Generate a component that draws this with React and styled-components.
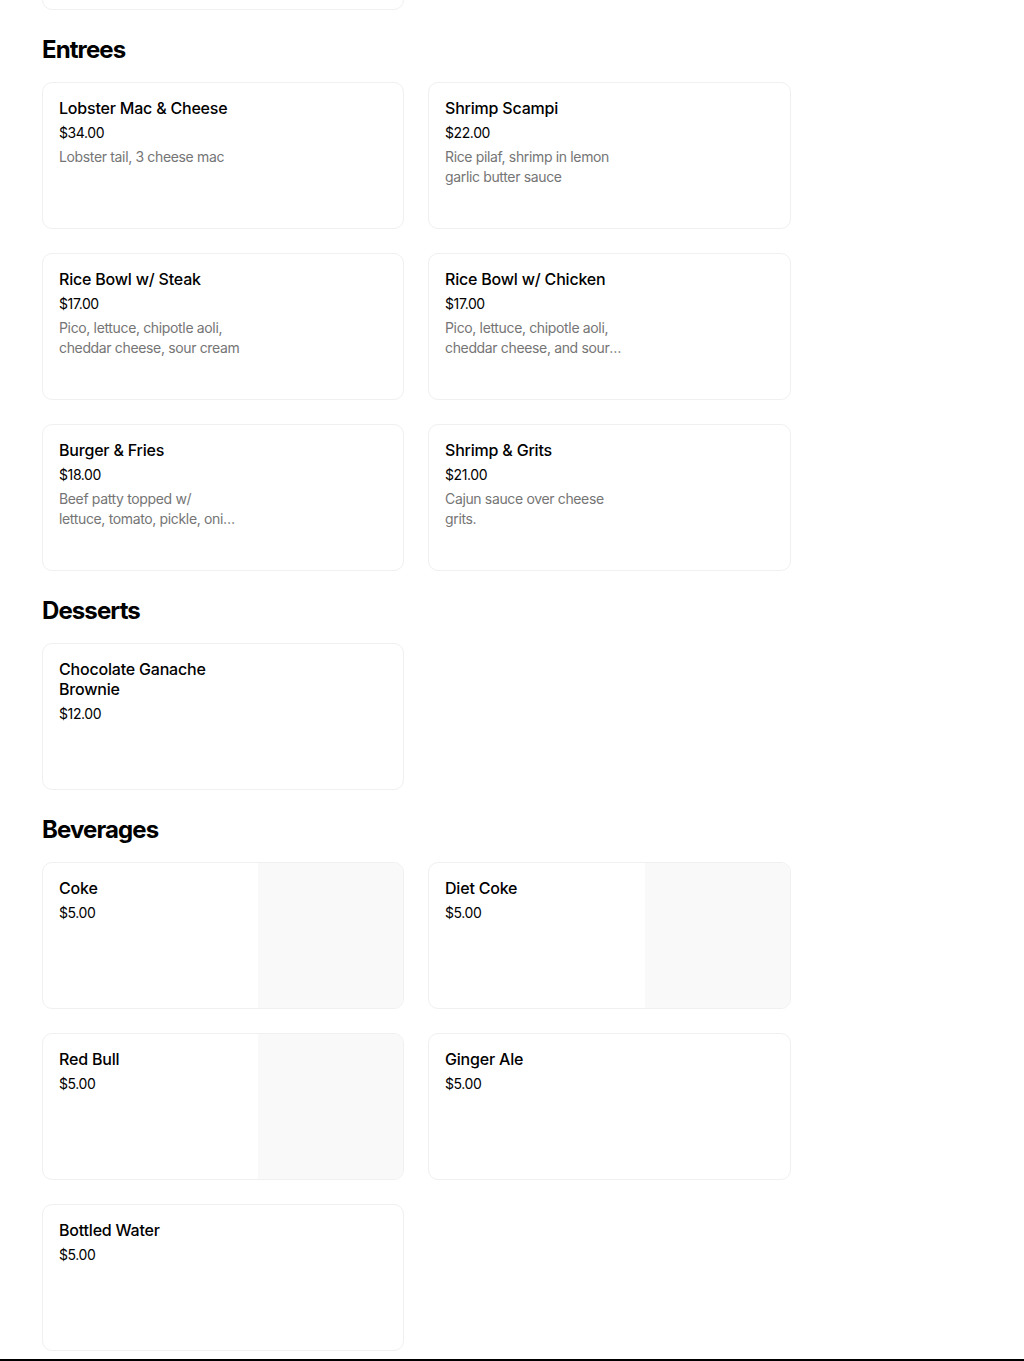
import React from "react";
import styled, { createGlobalStyle } from "styled-components";

const menu = [
  {
    title: "Entrees",
    items: [
      { name: "Lobster Mac & Cheese", price: "$34.00", desc: "Lobster tail, 3 cheese mac" },
      { name: "Shrimp Scampi", price: "$22.00", desc: "Rice pilaf, shrimp in lemon garlic butter sauce" },
      { name: "Rice Bowl w/ Steak", price: "$17.00", desc: "Pico, lettuce, chipotle aoli, cheddar cheese, sour cream" },
      { name: "Rice Bowl w/ Chicken", price: "$17.00", desc: "Pico, lettuce, chipotle aoli, cheddar cheese, and sour cream" },
      { name: "Burger & Fries", price: "$18.00", desc: "Beef patty topped w/ lettuce, tomato, pickle, onion and cheese" },
      { name: "Shrimp & Grits", price: "$21.00", desc: "Cajun sauce over cheese grits." },
    ],
  },
  {
    title: "Desserts",
    items: [{ name: "Chocolate Ganache Brownie", price: "$12.00" }],
  },
  {
    title: "Beverages",
    items: [
      { name: "Coke", price: "$5.00", photo: true },
      { name: "Diet Coke", price: "$5.00", photo: true },
      { name: "Red Bull", price: "$5.00", photo: true },
      { name: "Ginger Ale", price: "$5.00" },
      { name: "Bottled Water", price: "$5.00" },
    ],
  },
];

const App = () => {
  return (
    <>
      <GlobalStyle />
      <Page>
        <Content>
          {/* tail of the section above, scrolled out of view */}
          <Grid>
            <Card />
          </Grid>
          {menu.map((section) => (
            <Section key={section.title}>
              <SectionTitle>{section.title}</SectionTitle>
              <Grid>
                {section.items.map((item) => (
                  <Card key={item.name}>
                    <Info>
                      <ItemName>{item.name}</ItemName>
                      <Price>{item.price}</Price>
                      {item.desc && <Desc>{item.desc}</Desc>}
                    </Info>
                    {item.photo && <Photo />}
                  </Card>
                ))}
              </Grid>
            </Section>
          ))}
        </Content>
        <Footer />
      </Page>
    </>
  );
};

const GlobalStyle = createGlobalStyle`
  html, body {
    margin: 0;
    padding: 0;
    background: #fff;
    overflow: hidden;
  }
  body {
    font-family: Inter, "Noto Sans", "Liberation Sans", sans-serif;
    color: #000;
  }
`;

const Page = styled.div`
  height: 1361px;
  overflow: hidden;
  display: flex;
  flex-direction: column;
`;

const Content = styled.div`
  margin-top: -137px;
  padding: 0 0 8px 42px;
  width: 749px;
`;

const Section = styled.section`
  padding-top: 24px;
`;

const SectionTitle = styled.h2`
  margin: 0 0 16px;
  font-size: 24px;
  line-height: 32px;
  font-weight: 700;
  letter-spacing: -0.9px;
`;

const Grid = styled.div`
  display: grid;
  grid-template-columns: 362px 363px;
  gap: 24px;
`;

const Card = styled.div`
  box-sizing: border-box;
  height: 147px;
  display: flex;
  border: 1px solid #f0f0f0;
  border-radius: 10px;
  overflow: hidden;
  background: #fff;
`;

const Info = styled.div`
  flex: 1;
  min-width: 0;
  padding: 15px 16px;
  display: flex;
  flex-direction: column;
  align-items: flex-start;
`;

const ItemName = styled.div`
  max-width: 190px;
  font-size: 16px;
  line-height: 20px;
  font-weight: 500;
  letter-spacing: -0.2px;
  color: #000;
`;

const Price = styled.div`
  margin-top: 5px;
  font-size: 14px;
  line-height: 20px;
  letter-spacing: -0.4px;
  color: #000;
`;

const Desc = styled.div`
  margin-top: 4px;
  max-width: 181.5px;
  font-size: 14px;
  line-height: 20px;
  letter-spacing: -0.35px;
  color: #757575;
  display: -webkit-box;
  -webkit-line-clamp: 2;
  -webkit-box-orient: vertical;
  overflow: hidden;
`;

const Photo = styled.div`
  width: 145px;
  flex-shrink: 0;
  background: #f9f9f9;
`;

const Footer = styled.footer`
  height: 200px;
  background: #000;
  flex-shrink: 0;
`;

export default App;
